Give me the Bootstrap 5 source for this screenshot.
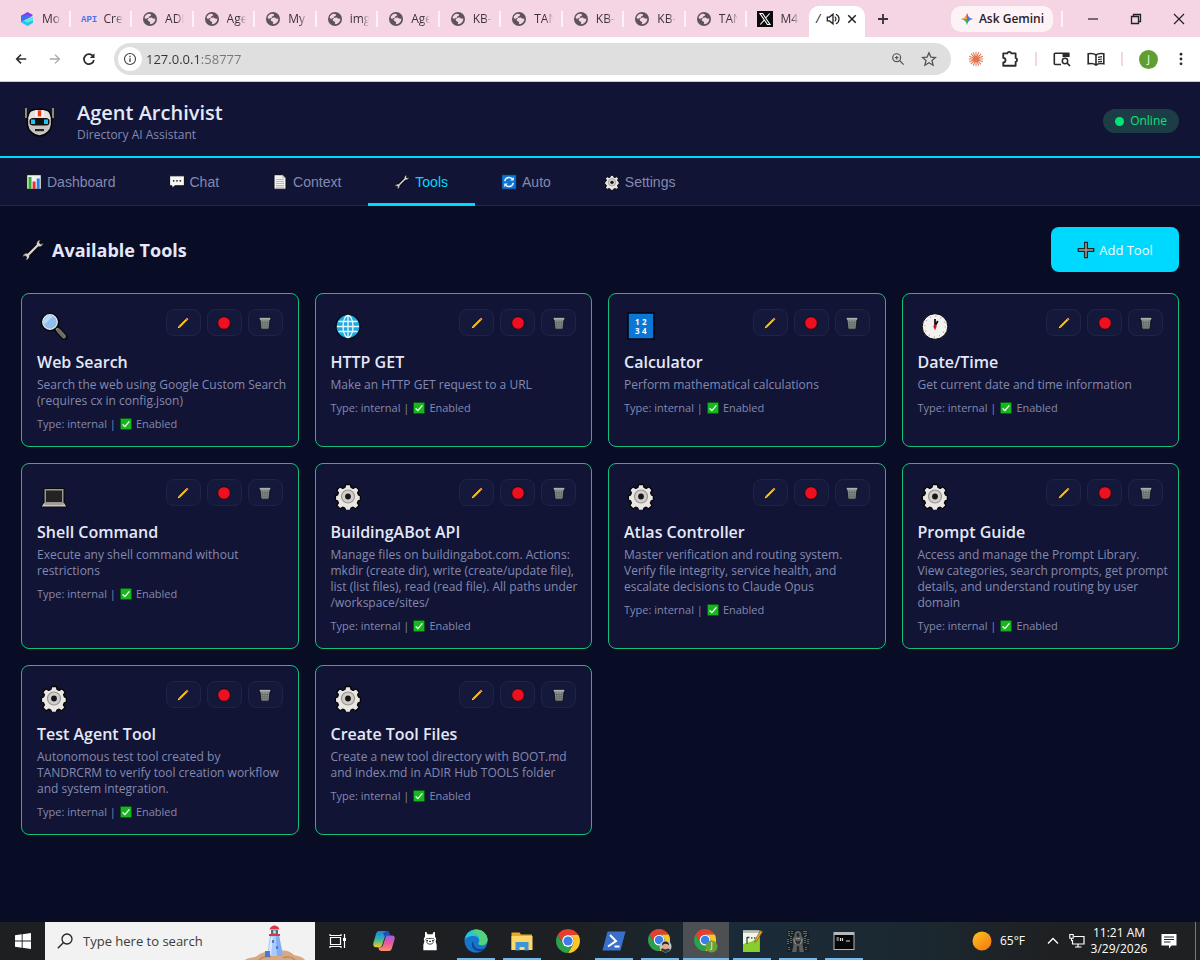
<!DOCTYPE html>
<html lang="en">
<head>
  <meta charset="UTF-8">
  <meta name="viewport" content="width=device-width, initial-scale=1">
  <title>Agent Archivist</title>
  <link href="https://cdn.jsdelivr.net/npm/bootstrap@5.3.3/dist/css/bootstrap.min.css" rel="stylesheet">
  <style>
    :root {
      --page: #090c25;
      --panel: #111435;
      --ink: #e4e8f8;
      --muted: #8489af;
      --cyan: #00d9ff;
      --green: #12c07c;
    }
    body { font-family: "Open Sans", "Noto Sans", sans-serif; font-size: 12px; line-height: 16px; background: var(--page); color: var(--ink); }
    svg { display: block; flex-shrink: 0; }
    button { font-family: inherit; }
    .plain-btn { background: none; border: 0; padding: 0; color: inherit; display: flex; align-items: center; justify-content: center; }
    .s12 { width: 12px; height: 12px; }
    .s14 { width: 14px; height: 14px; }
    .s16 { width: 16px; height: 16px; }
    .s18 { width: 18px; height: 18px; }
    .s20 { width: 20px; height: 20px; }
    .s24 { width: 24px; height: 24px; }
    .s28 { width: 28px; height: 28px; }
    .s36 { width: 36px; height: 36px; }

    /* browser window */
    .tab-strip { height: 37px; background: #f5d4e3; color: #3c3338; padding-left: 9px; }
    .tab-list { flex: 0 1 800px; min-width: 0; }
    .bg-tab { flex: 1 1 0; min-width: 0; height: 16px; gap: 7px; padding-left: 10px; border-right: 2px solid #fdf3f7; }
    .bg-tab:last-child { border-color: transparent; }
    .tab-name { width: 19px; overflow: hidden; white-space: nowrap; -webkit-mask-image: linear-gradient(90deg, #000 60%, transparent); mask-image: linear-gradient(90deg, #000 60%, transparent); }
    .open-tab { width: 56px; height: 31px; background: #fff; border-radius: 10px 10px 0 0; gap: 6px; padding-bottom: 5px; color: #222; }
    .gemini-btn { height: 26px; width: 102px; border-radius: 10px; background: #fdf3f7; color: #2a2024; font-weight: 600; gap: 5px; }
    .strip-line { width: 2px; height: 16px; background: #fdf3f7; }
    .win-btn { width: 43px; height: 37px; color: #222; }
    .tool-row { height: 45px; background: #fff; border-bottom: 1px solid #c9ccd6; color: #2b2b2b; }
    .nav-btn { width: 34px; height: 32px; }
    .address { height: 32px; border-radius: 16px; background: #dfdfdf; padding: 0 14px 0 4px; }
    .info-dot { width: 24px; height: 24px; border-radius: 50%; background: #fff; }
    .address input { border: 0; outline: 0; font-size: 13px; background: linear-gradient(90deg, #333 54px, #74777c 54px); -webkit-background-clip: text; background-clip: text; -webkit-text-fill-color: transparent; padding: 0; height: 20px; }
    .tool-icons { padding: 0 12px 0 16px; }
    .pink-line { width: 2px; height: 14px; background: #f5d4e3; }
    .avatar { width: 19px; height: 19px; border-radius: 50%; background: #5f9f32; color: #fff; font-size: 10px; }

    /* app */
    .app-head { background: var(--panel); border-bottom: 2px solid var(--cyan); padding: 17px 21px 13px; }
    .app-name { font-size: 20px; line-height: 28px; font-weight: 600; margin: 0; }
    .muted { color: var(--muted); }
    .status-pill { height: 24px; padding: 0 12px; border-radius: 12px; background: #1c3d45; color: #12e07e; gap: 6px; }
    .status-dot { width: 9px; height: 9px; border-radius: 50%; background: #00e676; }
    .app-nav { background: var(--panel); border-bottom: 1px solid #24284a; }
    .app-nav button { font: 14px/20px "Liberation Sans", Arial, sans-serif; color: var(--muted); gap: 5px; padding: 14px 27px 11px 26px; border-bottom: 3px solid transparent; margin-bottom: -1px; }
    .app-nav button.active { color: var(--cyan); border-color: var(--cyan); }
    .app-main { padding: 21px; }
    .page-head { margin-bottom: 21px; }
    .page-title { font-size: 18px; line-height: 26px; font-weight: 700; margin: 0; gap: 7px; }
    .add-btn { height: 45px; width: 128px; border-radius: 8px; background: var(--cyan); color: #f2fdff; font-size: 13px; gap: 4px; }
    .tool-box { height: 100%; background: var(--panel); border: 1px solid var(--green); border-radius: 8px; padding: 15px; }
    .tool-top { height: 43px; }
    .tool-top .s28 { margin: 3px; }
    .tool-actions { gap: 6px; }
    .mini-btn { width: 35px; height: 27px; border: 1px solid #1f2348; border-radius: 8px; background: #14183b; }
    .tool-name { font-size: 16px; line-height: 21px; font-weight: 600; margin: 0 0 4px; }
    .tool-desc { margin: 0 -6px 8px 0; }
    .tool-meta { font-size: 11px; line-height: 14px; gap: 4px; }

    /* task bar */
    .task-bar { height: 38px; background: linear-gradient(90deg, #1d1f20 0, #1d2023 48%, #1a2b38 62%, #1b2831 76%, #1f2021 88%); color: #fff; }
    .start-btn { width: 45px; }
    .search-area { width: 270px; background: #f2f2f2; padding-left: 12px; gap: 10px; color: #222; }
    .search-area input { border: 0; outline: 0; background: none; font-size: 13px; flex: 1 1 0; min-width: 0; padding: 0; }
    .search-area input::placeholder { color: #3b3b3b; opacity: 1; }
    .lighthouse { width: 60px; height: 37px; margin-right: 10px; }
    .task-btn { width: 46px; }
    .task-btn.running { background: linear-gradient(#76b9ed, #76b9ed) bottom / 38px 2px no-repeat; }
    .task-btn.current { background: linear-gradient(#76b9ed, #76b9ed) bottom / 100% 2px no-repeat, #4d5052; }
    .clock { width: 68px; }
    .desk-edge { width: 1px; background: #77797b; margin: 0 4px 0 18px; }
  </style>
</head>
<body class="vh-100 d-flex flex-column overflow-hidden">
  <script src="https://cdn.jsdelivr.net/npm/bootstrap@5.3.3/dist/js/bootstrap.bundle.min.js"></script>

  <!-- Icon sheet -->
  <svg width="0" height="0" class="position-absolute" aria-hidden="true">
    <symbol id="i-globe" viewBox="0 0 16 16"><circle cx="8" cy="8" r="7" fill="#5c5459"/><path d="M2.500 6.300C3.300 4.200 5 2.900 7.300 2.700l1.800.9-.4 1.400-1.700.6-.3 1.400-2 .3-.6 1.200z" fill="#f5d4e3"/><path d="M7.500 6.800l2.300-.4 1.200 1.200 2.300.2c0 2-.9 3.700-2.600 4.700l-1.900.8-1-.9.4-1.500-2-.8-.6-1.800z" fill="#f5d4e3"/></symbol>
    <symbol id="i-cube" viewBox="0 0 16 16"><path d="M8.500 1L2 4.700v3.500L8.500 4.500l3 1.700L14 4z" fill="#7b42f0"/><path d="M2 4.700v6.600L5 9.600l6.500-3.400-3-2z" fill="#3f6ff2"/><path d="M2 11.300L8.500 15 14 11.800V9l-5.500 2.500L5 9.600z" fill="#1ec7e8"/><path d="M5 9.600L14 5.500V9l-5.500 2.500z" fill="#5ae8e2"/></symbol>
    <symbol id="i-x" viewBox="0 0 16 16"><path fill="#0b0b0b" d="M0 0h16v16H0z"/><path d="M3 2.500h2.600l7.400 11h-2.600zM12.600 2.500L8.700 7M7.200 9L3.300 13.500" fill="none" stroke="#fff" stroke-width="1.100"/></symbol>
    <symbol id="i-sound" viewBox="0 0 16 16"><path d="M1.500 5.800h2.500L8 2.500v11l-4-3.300H1.500z" fill="none" stroke="#222" stroke-width="1.500"/><path d="M10 5.500a3 3 0 010 5M11.300 2.500a6 6 0 010 11" fill="none" stroke="#222" stroke-width="1.400"/></symbol>
    <symbol id="i-close" viewBox="0 0 16 16"><path d="M3 3l10 10M13 3L3 13" stroke="currentColor" stroke-width="2"/></symbol>
    <symbol id="i-close-thin" viewBox="0 0 16 16"><path d="M3 3l10 10M13 3L3 13" stroke="currentColor" stroke-width="1.200"/></symbol>
    <symbol id="i-add" viewBox="0 0 16 16"><path d="M8 4v8M4 8h8" stroke="currentColor" stroke-width="1.500"/></symbol>
    <symbol id="i-min" viewBox="0 0 16 16"><path d="M3 8h10" stroke="currentColor" stroke-width="1.200"/></symbol>
    <symbol id="i-restore" viewBox="0 0 16 16"><path d="M3.500 5.500h7v7h-7zM5.500 5.500v-2h7v7h-2" fill="none" stroke="currentColor" stroke-width="1.300"/></symbol>
    <symbol id="i-gemini" viewBox="0 0 16 16"><path d="M8 1c.8 4.200 2.800 6.200 7 7H1c4.200-.8 6.200-2.800 7-7z" fill="#e8503c"/><path d="M8 1c.8 4.200 2.800 6.200 7 7-4.200.8-6.200 2.800-7 7z" fill="#3b82f0"/><path d="M1 8h7v7c-.8-4.200-2.800-6.200-7-7z" fill="#3fb25a"/><path d="M1 8c3-.5 4.800-1.700 6-3.800L8 8z" fill="#f2b52c"/></symbol>
    <symbol id="i-back" viewBox="0 0 16 16"><path d="M14 8H3M8 3L3 8l5 5" fill="none" stroke="currentColor" stroke-width="1.700"/></symbol>
    <symbol id="i-fwd" viewBox="0 0 16 16"><path d="M2 8h11M8 3l5 5-5 5" fill="none" stroke="#aaa" stroke-width="1.600"/></symbol>
    <symbol id="i-reload" viewBox="0 0 16 16"><path d="M12.200 5.500A5 5 0 1012.900 9" fill="none" stroke="currentColor" stroke-width="1.700"/><path d="M13.500 2.300v4.700H8.800z" fill="currentColor"/></symbol>
    <symbol id="i-info" viewBox="0 0 16 16"><circle cx="8" cy="8" r="6.300" fill="none" stroke="#444" stroke-width="1.300"/><path d="M8 7v4.300M8 4.400v1.500" stroke="#444" stroke-width="1.500"/></symbol>
    <symbol id="i-zoom" viewBox="0 0 16 16"><circle cx="6.500" cy="6.500" r="4.500" fill="none" stroke="#555" stroke-width="1.400"/><path d="M10 10l4.500 4.500M6.500 4.500v4M4.500 6.500h4" stroke="#555" stroke-width="1.400"/></symbol>
    <symbol id="i-star" viewBox="0 0 16 16"><path d="M8 1.800l1.900 4.300 4.600.4L11 9.600l1.100 4.600L8 11.800l-4.100 2.400L5 9.600 1.500 6.500l4.600-.4z" fill="none" stroke="#555" stroke-width="1.300"/></symbol>
    <symbol id="i-burst" viewBox="0 0 16 16"><path d="M8 1.500v13M1.500 8h13M3.500 3.300l9 9.400M12.700 3.500l-9.400 9M5.500 2l5 12M10.500 2l-5 12M2 5.500l12 5M14 5.500l-12 5" stroke="#e2754f" stroke-width=".9"/></symbol>
    <symbol id="i-puzzle" viewBox="0 0 16 16"><path d="M2 3h3.600a1.900 1.900 0 013.600 0H13v4a1.900 1.900 0 010 3.600V14H2V11a2 2 0 000-4z" fill="none" stroke="currentColor" stroke-width="1.600" stroke-linejoin="round"/></symbol>
    <symbol id="i-tabsearch" viewBox="0 0 18 16"><path d="M8 13.500H2.300a1 1 0 01-1-1V3.300a1 1 0 011-1h13.200V6" fill="none" stroke="currentColor" stroke-width="1.600"/><path d="M9.500 2h7v4h-7z" fill="currentColor"/><circle cx="12" cy="10" r="2.700" fill="none" stroke="currentColor" stroke-width="1.500"/><path d="M14 12l3 3" stroke="currentColor" stroke-width="1.700"/></symbol>
    <symbol id="i-book" viewBox="0 0 18 16"><path d="M9 4C7 2.500 4 2.300 1.200 2.800v10C4 12.300 7 12.500 9 14c2-1.500 5-1.700 7.800-1.200v-10C14 2.300 11 2.500 9 4zM9 4v10" fill="none" stroke="currentColor" stroke-width="1.600"/><path d="M11 6.300l4-.6M11 8.600l4-.6M11 10.900l4-.6" stroke="currentColor" stroke-width="1.200"/></symbol>
    <symbol id="i-dots" viewBox="0 0 16 16"><g fill="currentColor"><circle cx="8" cy="2.500" r="1.600"/><circle cx="8" cy="8" r="1.600"/><circle cx="8" cy="13.500" r="1.600"/></g></symbol>

    <symbol id="i-robot" viewBox="0 0 36 36"><path d="M3.500 4.500h3v11h-3zM30.500 4.500h3v11h-3z" fill="#8b8683" stroke="#0a0a0a" stroke-width=".8"/><path d="M9 8.500C12 5.500 25 5.500 28 8.500c2.500 3 3 8 2.500 13.500-.3 5-6 11-12 11S6.800 27 6.500 22C6 16.500 6.500 11.500 9 8.500z" fill="#c8c5c3" stroke="#050505" stroke-width="1.500"/><path d="M10 9c2.500-2.300 14.500-2.300 17 0 1.500 2 2.300 4.500 2.600 7H7.400c.3-2.500 1.100-5 2.600-7z" fill="#e4e1df"/><path d="M14 7.400h9v6.500h-9z" fill="#f6f4f2"/><path d="M16.800 7.300h3.400v6.100h-3.400z" fill="#f03a17"/><rect x="8.500" y="15" width="20" height="7.500" rx="3.500" fill="#111"/><path d="M10 16.500h4v4.500h-4zM23 16.500h4v4.500h-4z" fill="#25c4ec"/><path d="M14 26h9v2.200h-9z" fill="#222"/></symbol>
    <symbol id="i-chart" viewBox="0 0 16 16"><path d="M.7.700h14.600v14.600H.7z" fill="#f2f2f2" stroke="#0a0a12"/><path d="M2.500 3h3v12h-3z" fill="#2fae2f"/><path d="M6.600 7.500h3V15h-3z" fill="#e8322d"/><path d="M10.700 4.500h3V15h-3z" fill="#2284e0"/></symbol>
    <symbol id="i-chat" viewBox="0 0 16 16"><path d="M.6 1.800h14.800v10H6l-3 2.500v-2.500H.6z" fill="#f6f6f6" stroke="#0a0a12"/><g fill="#222"><circle cx="4.700" cy="6.800" r=".9"/><circle cx="8" cy="6.800" r=".9"/><circle cx="11.300" cy="6.800" r=".9"/></g></symbol>
    <symbol id="i-page" viewBox="0 0 16 16"><path d="M2 .7h8.500L14 4.200v11H2z" fill="#f1f1f1" stroke="#0a0a12"/><path d="M10.500.7v3.500H14" fill="#bbb"/><path d="M4 5.500h7.500M4 7.500h8M4 9.500h8M4 11.500h8M4 13.300h8" stroke="#a9a9a9" stroke-width=".8"/></symbol>
    <symbol id="i-wrench" viewBox="0 0 20 20"><path d="M4.300 15.700L15.500 4.500" stroke="#060606" stroke-width="3.800"/><path d="M16.300 1.500a3.500 3.500 0 00-3.100 5l1.900.9a3.500 3.500 0 003.500-3.500l-2 1.300-1.400-1.200zM3.700 18.500a3.500 3.500 0 003.100-5l-1.900-.9a3.500 3.500 0 00-3.500 3.500l2-1.300 1.400 1.200z" fill="#d6d3d0" stroke="#060606" stroke-width=".6"/><path d="M5 15L15 5" stroke="#d6d3d0" stroke-width="2"/></symbol>
    <symbol id="i-auto" viewBox="0 0 16 16"><path d="M.7.700h14.600v14.600H.7z" fill="#0f74d8" stroke="#082038"/><path d="M3.700 7.200A4.500 4.500 0 0112 5.700M12.300 8.800A4.500 4.500 0 014 10.300" fill="none" stroke="#eaf5ff" stroke-width="1.500"/><path d="M12.700 3v3.600H9.200zM3.300 13V9.400h3.500z" fill="#eaf5ff"/></symbol>
    <symbol id="i-gear" viewBox="0 0 28 28"><path d="M11.700 2.500h4.600l.8 3 2.100.9 2.800-1.600 3.100 3.200-1.500 2.800.9 2.100 1.900.9v4.200l-2.100.8-.9 2.100 1.600 2.600-3.100 3.200-2.800-1.500-2.100.9-.8 2.300h-4.600l-.8-2.300-2.100-.9-2.800 1.500-3.100-3.200 1.600-2.600-.9-2.100-2.100-.8v-4.200l2.100-.9.9-2.100-1.600-2.800 3.100-3.200 2.800 1.600 2.100-.9z" fill="#e9e6e3" stroke="#050505" stroke-width="1.300" stroke-linejoin="round"/><circle cx="14" cy="14.500" r="6.500" fill="#d1cecb" stroke="#999693" stroke-width="1.200"/><circle cx="14" cy="14.500" r="2.900" fill="#161616"/></symbol>
    <symbol id="i-plus" viewBox="0 0 18 18"><path d="M7.600 1.300h2.800v6.300h6.300v2.800h-6.300v6.300H7.600v-6.300H1.300V7.600h6.300z" fill="#a39d97" stroke="#202a2e" stroke-width="1.300"/></symbol>
    <symbol id="i-search" viewBox="0 0 28 28"><path d="M16 16l8.500 9" stroke="#070707" stroke-width="6.500" stroke-linecap="round"/><path d="M16 16l3 3" stroke="#aaa" stroke-width="2.500"/><path d="M18.500 18.500l5.500 6" stroke="#6f6b69" stroke-width="4.200" stroke-linecap="round"/><circle cx="10" cy="10" r="8.300" fill="#9cc9f2" stroke="#070707" stroke-width="2"/><circle cx="10" cy="10" r="7.300" fill="#8fc0ed" stroke="#dfe9f2" stroke-width="1.200"/><path d="M4.500 12.500a6 6 0 018-8z" fill="#b9daf6"/></symbol>
    <symbol id="i-web" viewBox="0 0 28 28"><circle cx="14" cy="14.500" r="12" fill="#1fa8e0" stroke="#05070f" stroke-width="1.200"/><g fill="none" stroke="#e6f8ff" stroke-width="1.300"><ellipse cx="14" cy="14.500" rx="5" ry="11"/><path d="M14 3.500v22M3 14.500h22M4.500 9.500h19M4.500 19.500h19"/></g></symbol>
    <symbol id="i-clock" viewBox="0 0 28 28"><circle cx="14" cy="14.500" r="12.800" fill="#f3f1f0" stroke="#060606" stroke-width="1"/><circle cx="14" cy="14.500" r="10.300" fill="none" stroke="#aaa7a5" stroke-width="1.300" stroke-dasharray="1 4.400"/><path d="M14 14V7M14 14l2.800-5" stroke="#111" stroke-width="1.800"/><path d="M14 17.500v-5" stroke="#e8112d" stroke-width="1.600"/><circle cx="14" cy="14.500" r="1.600" fill="#c21126"/></symbol>
    <symbol id="i-laptop" viewBox="0 0 28 28"><path d="M3.500 6h21l.5 15 2.500 4.500H.5L3 21z" fill="#0a0a0a"/><path d="M4.500 7h19v14h-19z" fill="#9a9693"/><path d="M6 8.500h16V20H6z" fill="#242323"/><path d="M4 21h20l2.200 3.500H1.800z" fill="#c9c6c3"/><path d="M4.500 22h19" stroke="#777" stroke-width="1"/></symbol>
    <symbol id="i-pencil" viewBox="0 0 16 16"><path d="M1.500 14.500l1-3.200L12.300 1.500l2.200 2.200-9.800 9.800z" fill="#0a0a0a" stroke="#0a0a0a"/><path d="M2.900 11.300l8.300-8.300 1.900 1.900-8.300 8.300z" fill="#fbbd20"/><path d="M11.200 3l1.300-1.200 1.900 1.900L13.100 4.900z" fill="#ef8c8e"/><path d="M1.800 14.200l1.100-2.900 1.900 1.900z" fill="#eed3b0"/></symbol>
    <symbol id="i-red" viewBox="0 0 16 16"><circle cx="8" cy="8" r="7.200" fill="#ee1020" stroke="#16070f" stroke-width="1"/></symbol>
    <symbol id="i-trash" viewBox="0 0 16 16"><path d="M1.500 1.600h13v3h-.8L12.500 15h-9L2.300 4.600h-.8z" fill="#8a908f" stroke="#0b0b12" stroke-width="1"/><path d="M2 2.100h12v1.700H2z" fill="#aab0ae"/><path d="M5 5.200l.6 8.800M8 5.200V14M11 5.200l-.6 8.800M3.300 7.500h9.400M3.600 10h8.800M4 12.300h8" stroke="#5f6766" stroke-width=".8"/></symbol>
    <symbol id="i-check" viewBox="0 0 16 16"><path d="M.5.500h15v15H.5z" fill="#14b81c" stroke="#06210c" stroke-width=".6"/><path d="M3.500 8.500l3 3 6-7" fill="none" stroke="#fff" stroke-width="1.800"/></symbol>

    <symbol id="i-win" viewBox="0 0 16 16"><path d="M0 2.300l6.700-1v6.200H0zM7.600 1.200L16 0v7.500H7.600zM0 8.400h6.700v6.300L0 13.700zM7.600 8.400H16V16l-8.400-1.200z" fill="#fff"/></symbol>
    <symbol id="i-lens" viewBox="0 0 16 16"><circle cx="10" cy="6" r="5" fill="none" stroke="#222" stroke-width="1.300"/><path d="M6.300 9.700L.8 15.200" stroke="#222" stroke-width="1.300"/></symbol>
    <symbol id="i-lighthouse" viewBox="0 0 60 37"><path d="M0 37c4-3 9-2 12-4 6-5 13-5 19-4 8-3 14-1 18 3 4 1 9 2 11 5z" fill="#d8a980"/><path d="M14 37c3-3 8-4 12-3M38 35c4-2 9-1 12 2" stroke="#c08b62" stroke-width="1.500" fill="none"/><path d="M25 12h9l4 21H22z" fill="#a8cbfb"/><path d="M31 12h3l4 21h-6z" fill="#82aef0"/><path d="M26 14h2l-2 18h-3z" fill="#d7e7ff"/><path d="M26 7h7v4h-7z" fill="#4b756d"/><path d="M28.300 7.500h2.400v3h-2.400z" fill="#cdeee0"/><path d="M24.500 6.500c1-3 3-4 5-4s4 1 5 4z" fill="#d9364c"/><path d="M24 11h11v2H24z" fill="#d9364c"/><path d="M27 17h2v3h-2zM31 23h2v3h-2zM20 28h5v6h-5z" fill="#4f77cf"/></symbol>
    <symbol id="i-taskview" viewBox="0 0 18 16"><path d="M1.500 4.500h10v7h-10zM1 1v1.500h11V1M1 15v-1.500h11V15M15.500 1v14" fill="none" stroke="#fff" stroke-width="1.200"/><path d="M14 5h3v3h-3z" fill="#fff"/></symbol>
    <symbol id="i-copilot" viewBox="0 0 24 24"><linearGradient id="copl" x1="0" y1="0" x2="0" y2="1"><stop offset="0" stop-color="#1f7fe8"/><stop offset=".5" stop-color="#2fb6a8"/><stop offset="1" stop-color="#f2c82b"/></linearGradient><linearGradient id="copr" x1="0" y1="0" x2="0" y2="1"><stop offset="0" stop-color="#a05be8"/><stop offset=".5" stop-color="#e8589c"/><stop offset="1" stop-color="#f9926a"/></linearGradient><path d="M7 2h7.500c1.700 0 2.500 1 3 2.700L18 6.500h-3c-1.300 0-2 .7-2.400 2L10 16.500c-.5 1.200-1.200 1.700-2.400 1.700H4C1.700 18.200.8 16.500 1.400 14L4 5c.6-2 1.500-3 3-3z" fill="url(#copl)"/><path d="M17 22H9.500c-1.700 0-2.500-1-3-2.700L6 18.200h2.500c1.300 0 2-.7 2.400-2l2.600-8c.5-1.200 1.200-1.700 2.400-1.700H20c2.300 0 3.200 1.300 2.600 3.800L20 19c-.6 2-1.500 3-3 3z" fill="url(#copr)"/><path d="M14.500 2c1.700 0 2.500 1 3 2.700L18 6.500h-3c-1.300 0-1.800.3-2.200 1.200L11 4z" fill="#1a4fb8"/></symbol>
    <symbol id="i-llama" viewBox="0 0 20 24"><path d="M4 1.500l1.500-.5L7 4h6l1.500-3 1.500.5v5l1.500 3-.8 3 1.300 4V23H2v-6.500l1.300-4-.8-3 1.500-3z" fill="#fff"/><path d="M4.500 10.500c1.500-2 3-1.500 5.500-1.500s4-.5 5.500 1.500M6 13.500c1 3 7 3 8 0" fill="none" stroke="#222" stroke-width="1"/><path d="M5.500 10.700h2v2h-2zM12.500 10.700h2v2h-2zM9 11.700h2v1.500H9z" fill="#222"/></symbol>
    <symbol id="i-edge" viewBox="0 0 24 24"><circle cx="12" cy="12" r="11.500" fill="#1575cc"/><path d="M.7 11C1.500 4.500 6.500.5 12 .5c7 0 11.500 5 11.500 10 0 4-3 5.800-5.800 5.800-2.500 0-3.800-1-3.200-2.200C16.500 10.500 14 7 9.500 7 5 7 1.500 9 .7 11z" fill="#2bc3cf"/><path d="M12 .5c7 0 11.500 5 11.500 10 0 4-3 5.800-5.800 5.800-2 0-3.200-.8-3.200-1.700 3.500-4.600-.5-10.600-6-11.200C9.500 1.500 10.500.5 12 .5z" fill="#51d37b"/><path d="M9 12c-3 4 .5 10 6 10.200 3 0 5.500-1.700 6.500-3.200-7 3-12.500.5-12.500-7z" fill="#123f86"/></symbol>
    <symbol id="i-folder" viewBox="0 0 24 24"><path d="M1.500 3.500h8l1.500 2h11v15.500h-20.500z" fill="#e9a928"/><path d="M1.500 7h21v14h-21z" fill="#ffd668"/><path d="M5.500 13h13v8.500h-4V18h-5v3.500h-4z" fill="#3f94d6"/></symbol>
    <symbol id="i-chrome" viewBox="0 0 24 24"><path d="M1.610 6A12 12 0 0122.390 6H12a6 6 0 00-5.200 9z" fill="#e3402f"/><path d="M22.390 6A12 12 0 0112 24l5.200-9A6 6 0 0012 6z" fill="#fcc624"/><path d="M12 24A12 12 0 011.610 6L6.800 15a6 6 0 0010.400 0z" fill="#2ba14b"/><circle cx="12" cy="12" r="5.900" fill="#fff"/><circle cx="12" cy="12" r="4.600" fill="#3b7ded"/></symbol>
    <symbol id="i-chrome-me" viewBox="0 0 26 26"><use href="#i-chrome" width="24" height="24"/><circle cx="19" cy="19" r="6.500" fill="#b9c8c4"/><path d="M13.700 22.500c2-3 8-3 10.500 0a6.500 6.500 0 01-10.500 0z" fill="#343b46"/><circle cx="19" cy="18.500" r="3.500" fill="#e0ab8c"/><path d="M15.200 18c-.5-6 8-6 7.600 0-1-2-5-3-7.600 0z" fill="#222"/></symbol>
    <symbol id="i-shell" viewBox="0 0 24 24"><path d="M5.500 2.500h18L18.500 21.500H.5z" fill="#3a70cc"/><path d="M8 6l6 6-8 5.500M12.500 17.500h5" fill="none" stroke="#fff" stroke-width="2"/></symbol>
    <symbol id="i-notepad" viewBox="0 0 24 24"><path d="M3 1.500h16.500V23H3z" fill="#f3f5ea"/><path d="M3 15c5-1 10-3 16.500-7v15H3z" fill="#86cf2e"/><path d="M3 1.500h16.500V4H3z" fill="#b9bdb5"/><path d="M7 8v7M7 8.500h2.500M11 9h1.500M14 9h1.500" stroke="#36502f" stroke-width="1.300"/><path d="M20.500 1.500l2 1.300-5.500 9-2.200 1.700.4-2.700z" fill="#e5a12a" stroke="#6f5120" stroke-width=".6"/></symbol>
    <symbol id="i-statue" viewBox="0 0 24 24"><path d="M1 1h22v22H1z" fill="#1a2023"/><path d="M3 2v5M2 10v5M3 18v4M6 2v3M20 2v5M22 10v5M20 18v4M18 2v3M5 7v8M19 7v8" stroke="#77a19d" stroke-width="1.200" stroke-dasharray="1 1"/><path d="M12 2c2.800 0 3.800 2.500 3.500 5l2 3-1 6 1.500 7H6l1.500-7-1-6 2-3C8.200 4.500 9.200 2 12 2z" fill="#5a6061"/><path d="M12 4c1.300 0 1.700 1.700 1.500 3L12 8.500 10.500 7c-.2-1.300.2-3 1.500-3zM9 11l3 1.500 3-1.500-.7 3-2.300 1-2.300-1zM11 17h2l.5 6h-3z" fill="#24282a"/><path d="M8 10l1.500 5M16 10l-1.500 5M10 9.500h4" stroke="#a39b83" stroke-width=".8"/></symbol>
    <symbol id="i-cmd" viewBox="0 0 24 24"><path d="M1.500 3h21v18h-21z" fill="#b5b8ba"/><path d="M2.500 6h19v14h-19z" fill="#060606"/><path d="M4.500 9h2.500M4.500 11H7M8.500 9v3M10.500 9v3M14 12h4" stroke="#ddd" stroke-width="1.200"/></symbol>
    <symbol id="i-sun" viewBox="0 0 20 20"><linearGradient id="sung" x1="0" y1="0" x2=".8" y2="1"><stop offset="0" stop-color="#ffc51f"/><stop offset="1" stop-color="#f47a12"/></linearGradient><circle cx="10" cy="10" r="9.500" fill="url(#sung)"/></symbol>
    <symbol id="i-up" viewBox="0 0 16 16"><path d="M3 10.500l5-5 5 5" fill="none" stroke="#fff" stroke-width="1.300"/></symbol>
    <symbol id="i-net" viewBox="0 0 16 16"><path d="M5 3.500h10v7.500H3.500V7M9 11v3M6 14h6.500" fill="none" stroke="#fff" stroke-width="1.200"/><path d="M.8 1.500h3.400v3.800H.8zM2.500 5.300V8" fill="none" stroke="#fff" stroke-width="1.100"/></symbol>
    <symbol id="i-note" viewBox="0 0 16 16"><path d="M.5 1h15v11.500h-5L8 15.500v-3H.5z" fill="#fff"/><path d="M3 4h10M3 6.500h10M3 9h6.500" stroke="#222" stroke-width="1.100"/></symbol>
  </svg>

  <!-- Tab strip -->
  <div class="tab-strip d-flex align-items-center flex-shrink-0">
    <div class="tab-list d-flex" id="tabList"></div>
    <div class="open-tab d-flex align-items-center justify-content-center align-self-end">
      <span class="fst-italic">/</span>
      <svg class="s14"><use href="#i-sound"/></svg>
      <button class="plain-btn" aria-label="Close tab"><svg class="s12"><use href="#i-close"/></svg></button>
    </div>
    <button class="plain-btn ms-2" aria-label="New tab"><svg class="s20"><use href="#i-add"/></svg></button>
    <div class="d-flex align-items-center ms-auto">
      <button class="gemini-btn plain-btn me-2"><svg class="s14"><use href="#i-gemini"/></svg>Ask Gemini</button>
      <span class="strip-line me-2"></span>
      <button class="plain-btn win-btn" aria-label="Minimize"><svg class="s16"><use href="#i-min"/></svg></button>
      <button class="plain-btn win-btn" aria-label="Restore"><svg class="s16"><use href="#i-restore"/></svg></button>
      <button class="plain-btn win-btn" aria-label="Close"><svg class="s16"><use href="#i-close-thin"/></svg></button>
    </div>
  </div>

  <!-- Toolbar -->
  <div class="tool-row d-flex align-items-center flex-shrink-0">
    <div class="d-flex ps-1 pe-2">
      <button class="plain-btn nav-btn" aria-label="Back"><svg class="s14"><use href="#i-back"/></svg></button>
      <button class="plain-btn nav-btn" aria-label="Forward"><svg class="s14"><use href="#i-fwd"/></svg></button>
      <button class="plain-btn nav-btn" aria-label="Reload"><svg class="s16"><use href="#i-reload"/></svg></button>
    </div>
    <div class="address d-flex align-items-center flex-grow-1">
      <span class="info-dot d-flex align-items-center justify-content-center me-1"><svg class="s14"><use href="#i-info"/></svg></span>
      <input class="flex-grow-1" type="text" value="127.0.0.1:58777" aria-label="Address">
      <button class="plain-btn me-3" aria-label="Zoom"><svg class="s14"><use href="#i-zoom"/></svg></button>
      <button class="plain-btn" aria-label="Bookmark"><svg class="s16"><use href="#i-star"/></svg></button>
    </div>
    <div class="tool-icons d-flex align-items-center gap-3">
      <button class="plain-btn" aria-label="Assistant"><svg class="s18"><use href="#i-burst"/></svg></button>
      <button class="plain-btn" aria-label="Extensions"><svg class="s18"><use href="#i-puzzle"/></svg></button>
      <span class="pink-line"></span>
      <button class="plain-btn" aria-label="Search tabs"><svg class="s18"><use href="#i-tabsearch"/></svg></button>
      <button class="plain-btn" aria-label="Reading list"><svg class="s18"><use href="#i-book"/></svg></button>
      <span class="pink-line"></span>
      <button class="plain-btn avatar" aria-label="Profile">J</button>
      <button class="plain-btn" aria-label="Menu"><svg class="s14"><use href="#i-dots"/></svg></button>
    </div>
  </div>

  <!-- App header -->
  <header class="app-head d-flex align-items-center justify-content-between flex-shrink-0">
    <div class="d-flex align-items-center">
      <svg class="s36 me-3"><use href="#i-robot"/></svg>
      <div class="ps-1">
        <h1 class="app-name">Agent Archivist</h1>
        <div class="muted">Directory AI Assistant</div>
      </div>
    </div>
    <div class="status-pill d-flex align-items-center"><span class="status-dot"></span>Online</div>
  </header>

  <nav class="app-nav d-flex flex-shrink-0" id="appNav"></nav>

  <main class="app-main flex-grow-1 overflow-hidden">
    <div class="page-head d-flex align-items-center justify-content-between">
      <h2 class="page-title d-flex align-items-center"><svg class="s24"><use href="#i-wrench"/></svg>Available Tools</h2>
      <button class="plain-btn add-btn"><svg class="s18"><use href="#i-plus"/></svg>Add Tool</button>
    </div>
    <div class="row row-cols-1 row-cols-sm-2 row-cols-lg-4 gx-3 gy-3" id="toolGrid"></div>
  </main>

  <!-- Task bar -->
  <footer class="task-bar d-flex flex-shrink-0">
    <button class="plain-btn start-btn" aria-label="Start"><svg class="s16"><use href="#i-win"/></svg></button>
    <div class="search-area d-flex align-items-center">
      <svg class="s16"><use href="#i-lens"/></svg>
      <input type="text" placeholder="Type here to search" aria-label="Type here to search">
      <svg class="lighthouse"><use href="#i-lighthouse"/></svg>
    </div>
    <div class="d-flex" id="taskList"></div>
    <div class="d-flex align-items-center ms-auto">
      <svg class="s20 me-2"><use href="#i-sun"/></svg>
      <span class="me-3">65°F</span>
      <button class="plain-btn ms-1 me-2" aria-label="Hidden icons"><svg class="s16"><use href="#i-up"/></svg></button>
      <svg class="s16"><use href="#i-net"/></svg>
      <div class="clock text-center">11:21 AM<br>3/29/2026</div>
      <button class="plain-btn ms-2" aria-label="Notifications"><svg class="s16"><use href="#i-note"/></svg></button>
      <span class="desk-edge align-self-stretch"></span>
    </div>
  </footer>

  <script>
    // icons with lettering are written in place, the rest come from the sheet
    const lettered = {
      api: ["0 0 16 16", '<text x="0" y="11" font-family="Liberation Mono, monospace" font-weight="700" font-size="9" fill="#4a74e8">API</text>'],
      digits: ["0 0 28 28", '<path d="M1 1h26v26H1z" fill="#0a76d6" stroke="#04060f" stroke-width="1.600"/><g fill="#fff" font-family="Open Sans, sans-serif" font-weight="700" font-size="8"><text x="8" y="13">1</text><text x="15" y="13">2</text><text x="8" y="22">3</text><text x="15" y="22">4</text></g>'],
      "chrome-j": ["0 0 26 26", '<use href="#i-chrome" width="24" height="24"/><circle cx="19" cy="19" r="6.500" fill="#64a338"/><text x="19" y="22" text-anchor="middle" font-size="9" font-family="Open Sans, sans-serif" fill="#fff">J</text>']
    };
    const icon = (name, size) => lettered[name]
      ? `<svg class="${size}" viewBox="${lettered[name][0]}">${lettered[name][1]}</svg>`
      : `<svg class="${size}"><use href="#i-${name}"/></svg>`;

    const tabs = [
      ["cube", "Mod"], ["api", "Crea"], ["globe", "ADIR"], ["globe", "Agen"], ["globe", "My"],
      ["globe", "img"], ["globe", "Agen"], ["globe", "KB-"], ["globe", "TAN"], ["globe", "KB-"],
      ["globe", "KB-"], ["globe", "TAN"], ["x", "M4"]
    ];
    document.getElementById("tabList").innerHTML = tabs.map(([name, label]) => `
      <div class="bg-tab d-flex align-items-center">
        ${icon(name, "s16")}<span class="tab-name">${label}</span>
      </div>`).join("");

    const sections = [["chart", "Dashboard"], ["chat", "Chat"], ["page", "Context"], ["wrench", "Tools"], ["auto", "Auto"], ["gear", "Settings"]];
    document.getElementById("appNav").innerHTML = sections.map(([name, label]) => `
      <button class="plain-btn ${label === "Tools" ? "active" : ""}">${icon(name, "s16")}${label}</button>`).join("");

    const tools = [
      ["search", "Web Search", "Search the web using Google Custom Search (requires cx in config.json)"],
      ["web", "HTTP GET", "Make an HTTP GET request to a URL"],
      ["digits", "Calculator", "Perform mathematical calculations"],
      ["clock", "Date/Time", "Get current date and time information"],
      ["laptop", "Shell Command", "Execute any shell command without restrictions"],
      ["gear", "BuildingABot API", "Manage files on buildingabot.com. Actions: mkdir (create dir), write (create/update file), list (list files), read (read file). All paths under /workspace/sites/"],
      ["gear", "Atlas Controller", "Master verification and routing system. Verify file integrity, service health, and escalate decisions to Claude Opus"],
      ["gear", "Prompt Guide", "Access and manage the Prompt Library.<br>View categories, search prompts, get prompt details, and understand routing by user domain"],
      ["gear", "Test Agent Tool", "Autonomous test tool created by TANDRCRM to verify tool creation workflow and system integration."],
      ["gear", "Create Tool Files", "Create a new tool directory with BOOT.md and index.md in ADIR Hub TOOLS folder"]
    ];
    document.getElementById("toolGrid").innerHTML = tools.map(([name, title, desc]) => `
      <div class="col">
        <div class="tool-box">
          <div class="tool-top d-flex justify-content-between align-items-start">
            ${icon(name, "s28")}
            <div class="tool-actions d-flex">
              <button class="plain-btn mini-btn" aria-label="Edit ${title}">${icon("pencil", "s14")}</button>
              <button class="plain-btn mini-btn" aria-label="Disable ${title}">${icon("red", "s14")}</button>
              <button class="plain-btn mini-btn" aria-label="Delete ${title}">${icon("trash", "s14")}</button>
            </div>
          </div>
          <h3 class="tool-name">${title}</h3>
          <p class="tool-desc muted">${desc}</p>
          <div class="tool-meta muted d-flex align-items-center">Type: internal | ${icon("check", "s12")} Enabled</div>
        </div>
      </div>`).join("");

    const tasks = [
      ["taskview", "s18", ""], ["copilot", "s24", ""], ["llama", "s20", ""], ["edge", "s24", "running"],
      ["folder", "s24", "running"], ["chrome", "s24", ""], ["shell", "s24", "running"], ["chrome-me", "s24", "running"],
      ["chrome-j", "s24", "running current"], ["notepad", "s24", "running"], ["statue", "s24", "running"], ["cmd", "s24", "running"]
    ];
    document.getElementById("taskList").innerHTML = tasks.map(([name, size, state]) => `
      <button class="plain-btn task-btn ${state}" aria-label="${name}">${icon(name, size)}</button>`).join("");
  </script>
</body>
</html>
